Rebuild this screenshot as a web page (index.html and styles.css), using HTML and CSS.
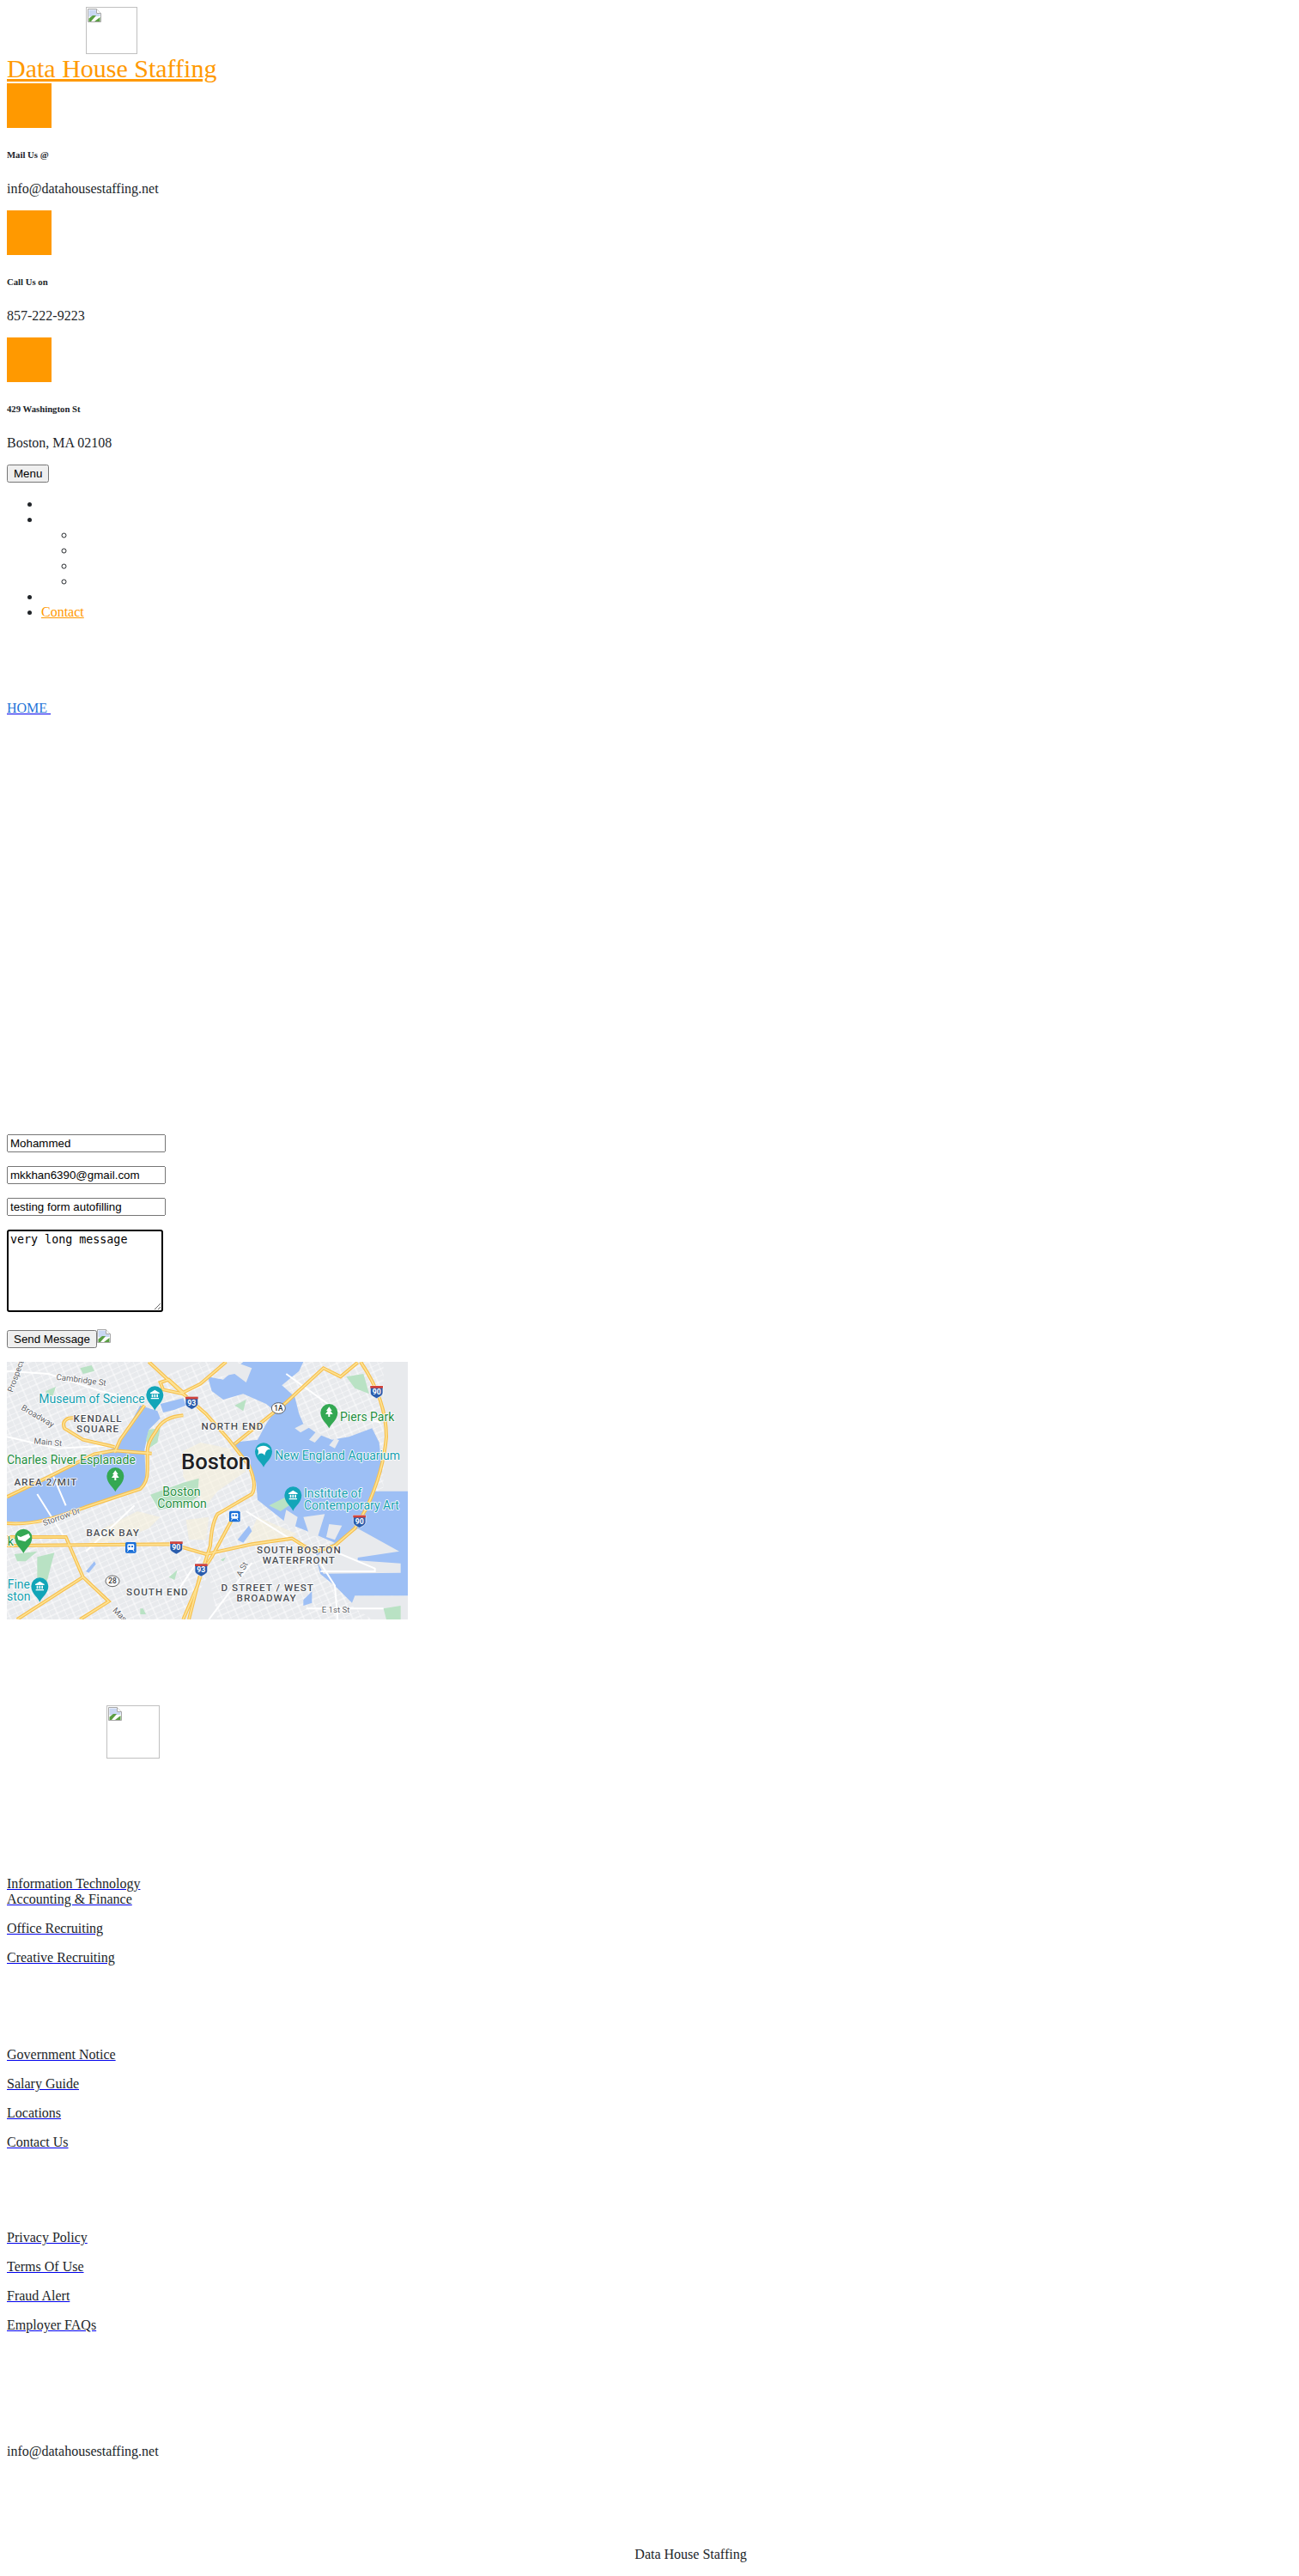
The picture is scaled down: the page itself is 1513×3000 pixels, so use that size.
FILE: index.html
```html
<!DOCTYPE html>
<html>
	<head>
		<title>Data House Staffing</title>
		<link rel="stylesheet" href="styles.css">
	</head>
	<body>
		<span class="broken logo"><svg class="broken-icon"><use href="#broken"/></svg></span>
		<a class="brand" href="#">Data House Staffing</a>

		<div class="square"></div>
		<h6>Mail Us @</h6>
		<p>info@datahousestaffing.net</p>
		<div class="square"></div>
		<h6>Call Us on</h6>
		<p>857-222-9223</p>
		<div class="square"></div>
		<h6>429 Washington St</h6>
		<p>Boston, MA 02108</p>

		<button class="btn">Menu</button>
		<ul>
			<li>&nbsp;</li>
			<li>&nbsp;
				<ul>
					<li>&nbsp;</li>
					<li>&nbsp;</li>
					<li>&nbsp;</li>
					<li>&nbsp;</li>
				</ul>
			</li>
			<li>&nbsp;</li>
			<li><a class="orange" href="#">Contact</a></li>
		</ul>

		<div class="crumb"><a href="#"><span class="crumb-text">HOME&nbsp;</span></a></div>

		<form class="contact-form">
			<p><input class="field" type="text" value="Mohammed"></p>
			<p><input class="field" type="text" value="mkkhan6390@gmail.com"></p>
			<p><input class="field" type="text" value="testing form autofilling"></p>
			<p><textarea class="message">very long message</textarea></p>
			<p class="send"><button class="btn send-btn" type="button">Send Message</button><svg class="send-icon"><use href="#broken"/></svg></p>
		</form>

		<svg class="map" viewBox="24 18 1401 900">
			<defs>
				<pattern id="streets" width="52" height="40" patternUnits="userSpaceOnUse" patternTransform="rotate(-24)">
					<rect width="52" height="40" fill="#e8eaed"/>
					<path d="M0 0H52M0 20H52M0 0V40M26 0V40" stroke="#fff" stroke-width="2.5"/>
				</pattern>
				<g id="pin"><path d="M0 55C-6 40-30 26-30 0A30 30 0 0 1 30 0C30 26 6 40 0 55Z"/></g>
				<g id="museum" fill="#fff">
					<path d="M-16-7 0-17 16-7V-4H-16ZM-14 11H14V15H-14Z"/>
					<path d="M-11-2H-6V9H-11ZM-2.500-2H2.500V9H-2.500ZM6-2H11V9H6Z"/>
				</g>
				<g id="tree" fill="#fff"><path d="M0-20-10-6H-5L-13 6H-3V15H3V6H13L5-6H10Z"/></g>
				<g id="i90">
					<path d="M-22-18H22V6C22 16 8 22 0 26-8 22-22 16-22 6Z" fill="#2a5dad" stroke="#fff" stroke-width="2"/>
					<path d="M-22-18H22V-10H-22Z" fill="#d3433a"/>
				</g>
				<g id="rail">
					<rect x="-19" y="-19" width="38" height="38" rx="5" fill="#1a6fd8"/>
					<rect x="-12" y="-12" width="24" height="20" rx="4" fill="#fff"/>
					<path d="M-8 8-12 14M8 8 12 14" stroke="#fff" stroke-width="3"/>
					<rect x="-8" y="-7" width="6" height="6" fill="#1a6fd8"/>
					<rect x="2" y="-7" width="6" height="6" fill="#1a6fd8"/>
				</g>
			</defs>

			<rect x="24" y="18" width="1401" height="900" fill="url(#streets)"/>
			<path class="pale" d="M640 330 700 300 800 320 860 400 760 470 720 520 640 420ZM300 660 420 640 520 600 560 560 480 540 360 600ZM650 570 730 560 720 640 660 640Z"/>
			<path class="pale" d="M900 560 1040 620 1000 640 860 650Z"/>
			<path class="gray" d="M1340 18H1425V500H1340ZM1230 835H1425V918H1300L1230 870Z"/>
			<path class="gray" d="M760 918 730 760 640 918ZM500 18 700 18 560 70Z"/>

			<!-- water -->
			<path class="water" d="M24 495 180 420 300 355 410 315 490 170 550 190 560 215 520 255 505 325 510 440 490 465 300 520 200 560 100 578 24 575Z"/>
			<path class="water" d="M850 18H1060L1045 50 985 100 1030 140 1045 200 1060 235 1110 270 1160 290 1220 280 1300 250 1325 300 1335 400 1300 470 1425 470V835H1240L1230 860 1200 830 1170 800 1120 760 1100 690 1170 650 1100 620 1000 580 900 500 895 440 870 380 810 300 900 290 930 235 960 190 930 165 850 130 780 150 740 120 726 70 780 80Z"/>
			<path class="water" d="M560 165 640 145 650 170 610 185 570 195Z"/>
			<path class="water" d="M830 640 870 590 880 610 850 650ZM1060 850 1090 820 1090 860 1060 870ZM300 750 330 715 335 725 310 755Z"/>

			<!-- piers and parks -->
			<path class="gray" d="M1170 655 1250 600 1395 680 1250 702V712L1400 722V755L1130 758 1100 700Z"/>
			<path class="gray" d="M1060 560 1135 550 1110 630 1080 620ZM1150 585 1195 590 1170 640 1140 630ZM1000 535 1040 560 1030 600 990 580Z"/>
			<path class="gray" d="M820 18H730L770 70 820 60 860 90 880 40ZM1060 235 1030 250 1050 265 1085 245ZM1105 262 1080 290 1100 300 1125 272ZM1170 285 1150 310 1170 320 1185 292Z"/>
			<path class="park" d="M525 482 640 440 695 425 690 490 650 520 555 535Z"/>
			<path class="park" d="M1210 70 1270 60 1290 130 1240 110Z"/>
			<path class="park" d="M510 290 520 255 560 250 550 300 520 320Z"/>
			<path class="park" d="M280 40 320 30 330 50 290 60ZM160 120 195 105 185 135 160 140ZM130 700 190 685 160 800 130 780ZM50 690 130 680 90 715 60 715ZM1340 880 1400 870 1400 918 1350 918ZM490 880 500 880 510 900 490 900Z"/>
			<path class="park" d="M590 770 620 745 610 780ZM770 710 790 700 780 715ZM820 170 860 150 850 190ZM940 520 1000 490 1040 500 980 540Z"/>

			<!-- main white roads -->
			<path class="road" d="M170 380 230 520M230 640 130 480M620 120 760 240M300 680 470 520M860 540 1100 690 1170 800 1180 918M1120 660 1310 740 1310 750 1120 750M880 720 730 918M700 700 600 850M1070 880H1340M1000 60 1180 190 1330 230"/>
			<path class="road" d="M24 280 200 320 400 310M24 50 170 60 350 120 480 150"/>

			<!-- highways -->
			<g class="highway">
				<path d="M24 582C120 590 200 560 300 525L490 462Q515 440 515 400L515 330Q515 300 545 260 570 210 640 205"/>
				<path d="M24 490 180 415 330 340 400 328 530 338"/>
				<path d="M505 170 420 290 400 335M400 315 290 290 225 250Q215 225 240 215L270 212"/>
				<path d="M520 18 640 130 720 200 800 290 870 380Q900 450 880 480L760 550Q740 580 735 660L690 800 640 918"/>
				<path d="M790 18 700 95 640 125 590 80 560 90 570 115 640 130"/>
				<path d="M24 660 600 655 720 690 880 655 1020 635 1060 660 1100 682"/>
				<path d="M810 570 740 700 700 760 660 918"/>
				<path d="M24 630 230 630 290 770 380 855 280 918M290 770 60 918"/>
				<path d="M820 305 1000 160 1130 40 1190 70 1250 20"/>
				<path d="M1260 18Q1350 150 1350 280 1340 400 1280 530L1240 600 1170 660 1100 682"/>
			</g>
			<g class="highway-in">
				<path d="M24 582C120 590 200 560 300 525L490 462Q515 440 515 400L515 330Q515 300 545 260 570 210 640 205"/>
				<path d="M24 490 180 415 330 340 400 328 530 338"/>
				<path d="M505 170 420 290 400 335M400 315 290 290 225 250Q215 225 240 215L270 212"/>
				<path d="M520 18 640 130 720 200 800 290 870 380Q900 450 880 480L760 550Q740 580 735 660L690 800 640 918"/>
				<path d="M790 18 700 95 640 125 590 80 560 90 570 115 640 130"/>
				<path d="M24 660 600 655 720 690 880 655 1020 635 1060 660 1100 682"/>
				<path d="M810 570 740 700 700 760 660 918"/>
				<path d="M24 630 230 630 290 770 380 855 280 918M290 770 60 918"/>
				<path d="M820 305 1000 160 1130 40 1190 70 1250 20"/>
				<path d="M1260 18Q1350 150 1350 280 1340 400 1280 530L1240 600 1170 660 1100 682"/>
			</g>

			<!-- labels -->
			<g class="lbl-street">
				<text transform="translate(196 80) rotate(7)">Cambridge St</text>
				<text transform="translate(44 126) rotate(-70)">Prospect</text>
				<text transform="translate(72 184) rotate(30)">Broadway</text>
				<text transform="translate(118 304) rotate(5)">Main St</text>
				<text transform="translate(154 592) rotate(-20)">Storrow Dr</text>
				<text transform="translate(842 770) rotate(-62)">A St</text>
				<text transform="translate(392 888) rotate(45)">Mass</text>
				<text x="1124" y="894">E 1st St</text>
			</g>
			<g class="lbl-area">
				<text x="342" y="228">KENDALL</text>
				<text x="342" y="264">SQUARE</text>
				<text x="160" y="450">AREA 2/MIT</text>
				<text x="813" y="255">NORTH END</text>
				<text x="395" y="627">BACK BAY</text>
				<text x="1045" y="687">SOUTH BOSTON</text>
				<text x="1045" y="723">WATERFRONT</text>
				<text x="935" y="819">D STREET / WEST</text>
				<text x="932" y="855">BROADWAY</text>
				<text x="550" y="834">SOUTH END</text>
			</g>
			<g class="lbl-teal">
				<text x="136" y="162">Museum of Science</text>
				<text x="961" y="360">New England Aquarium</text>
				<text x="1062" y="492">Institute of</text>
				<text x="1062" y="534">Contemporary Art</text>
				<text x="26" y="810">Fine</text>
				<text x="24" y="852">ston</text>
			</g>
			<g class="lbl-green">
				<text x="24" y="374">Charles River Esplanade</text>
				<text x="1188" y="224">Piers Park</text>
				<text x="568" y="486">Boston</text>
				<text x="550" y="528">Common</text>
				<text x="26" y="660">k</text>
			</g>
			<text class="lbl-city" x="633" y="392">Boston</text>

			<!-- pins -->
			<g class="pin-teal">
				<use href="#pin" x="541" y="133"/>
				<use href="#pin" x="921" y="331"/>
				<use href="#pin" x="1024" y="484"/>
				<use href="#pin" x="139" y="802"/>
			</g>
			<g class="pin-green">
				<use href="#pin" x="403" y="417"/>
				<use href="#pin" x="1150" y="195"/>
				<use href="#pin" x="82" y="632"/>
			</g>
			<use href="#museum" x="541" y="133"/>
			<use href="#museum" x="1024" y="484"/>
			<use href="#museum" x="139" y="802"/>
			<use href="#tree" x="403" y="417"/>
			<use href="#tree" x="1150" y="195"/>
			<path d="M897 320C915 305 935 310 945 325 935 322 928 328 925 345 918 335 908 335 900 345 905 332 904 326 897 320Z" fill="#fff"/>
			<path d="M60 625 72 630 100 618 106 630 88 646 64 640Z" fill="#fff"/>

			<!-- shields -->
			<use href="#i90" x="670" y="158"/>
			<use href="#i90" x="703" y="742"/>
			<use href="#i90" x="1316" y="120"/>
			<use href="#i90" x="1256" y="572"/>
			<use href="#i90" x="616" y="664"/>
			<text class="shield-num" x="670" y="170">93</text>
			<text class="shield-num" x="703" y="754">93</text>
			<text class="shield-num" x="1316" y="132">90</text>
			<text class="shield-num" x="1256" y="584">90</text>
			<text class="shield-num" x="616" y="676">90</text>
			<ellipse class="route" cx="973" cy="180" rx="24" ry="19"/>
			<ellipse class="route" cx="393" cy="784" rx="24" ry="19"/>
			<text class="route-num" x="973" y="189">1A</text>
			<text class="route-num" x="393" y="793">28</text>
			<use href="#rail" x="820" y="558"/>
			<use href="#rail" x="457" y="667"/>
		</svg>

		<span class="broken footer-logo"><svg class="broken-icon"><use href="#broken"/></svg></span>

		<div class="links links-a">
			<p><a href="#"><span>Information Technology</span></a><br><a href="#"><span>Accounting &amp; Finance</span></a></p>
			<p><a href="#"><span>Office Recruiting</span></a></p>
			<p><a href="#"><span>Creative Recruiting</span></a></p>
		</div>
		<div class="links links-b">
			<p><a href="#"><span>Government Notice</span></a></p>
			<p><a href="#"><span>Salary Guide</span></a></p>
			<p><a href="#"><span>Locations</span></a></p>
			<p><a href="#"><span>Contact Us</span></a></p>
		</div>
		<div class="links links-b">
			<p><a href="#"><span>Privacy Policy</span></a></p>
			<p><a href="#"><span>Terms Of Use</span></a></p>
			<p><a href="#"><span>Fraud Alert</span></a></p>
			<p><a href="#"><span>Employer FAQs</span></a></p>
		</div>
		<div class="footer-mail">info@datahousestaffing.net</div>
		<div class="copy">Data House Staffing</div>

		<svg class="svg-defs">
			<symbol id="broken" viewBox="0 0 16 16">
				<path d="M.5.5H10.500L15.500 5.500V15.500H.5Z" fill="#fff" stroke="#a8a8a8"/>
				<path d="M1.500 1.500H10V6H14.500V9L1.500 9.500Z" fill="#c9d7f2"/>
				<path d="M1.500 15V11.500L6 8H10L4 15Z" fill="#5a9e43"/>
				<path d="M8 15 14.500 10V15Z" fill="#5a9e43"/>
				<path d="M10.500.5V5.500H15.500" fill="#fff" stroke="#a8a8a8"/>
			</symbol>
		</svg>
	</body>
</html>
```

FILE: styles.css
```css
body
{
	margin:8px;
	font-family:"Liberation Serif",serif;
	font-size:16px;
	color:#212529;
	background:white;
}
.broken
{
	display:block;
	box-sizing:border-box;
	border:solid #c0c0c0 1px;
	padding:1px;
}
.broken-icon
{
	display:block;
	width:16px;
	height:16px;
}
.logo
{
	width:60px;
	height:55px;
	margin-left:92px;
}
.brand
{
	display:block;
	font-size:30px;
	line-height:34px;
	color:#ff9900;
}
.square
{
	width:52px;
	height:52px;
	background:#ff9900;
}
.btn
{
	font-family:"Liberation Sans",sans-serif;
	font-size:13.333px;
}
a
{
	color:#0000ee;
}
.orange
{
	color:#ff9900;
}
.crumb
{
	margin-top:94px;
}
.crumb-text
{
	color:#1e73d8;
}
.contact-form
{
	margin-top:487px;
}
.field
{
	box-sizing:border-box;
	width:185px;
	height:21px;
	font-family:"Liberation Sans",sans-serif;
	font-size:13.333px;
	vertical-align:top;
}
.message
{
	display:block;
	box-sizing:border-box;
	width:182px;
	height:96px;
	padding:2px;
	border:solid black 2px;
	border-radius:3px;
	outline:none;
	font-family:monospace;
	font-size:13.333px;
}
.send
{
	display:flex;
	align-items:flex-start;
	height:22px;
	margin-top:20px;
	margin-bottom:16px;
}
.send-btn
{
	margin-top:1px;
}
.send-icon
{
	width:16px;
	height:16px;
}
.map
{
	display:block;
	width:467px;
	height:300px;
}
.pale{fill:#f8f0d8;opacity:.55;}
.gray{fill:#e8eaed;}
.water{fill:#9dbff5;}
.park{fill:#b9e2c4;}
.road{fill:none;stroke:#fff;stroke-width:6;}
.highway path{fill:none;stroke:#f7c04f;stroke-width:12;}
.highway-in path{fill:none;stroke:#fde293;stroke-width:5;}
.map text
{
	font-family:Roboto,sans-serif;
	paint-order:stroke;
	stroke:#fff;
	stroke-width:5px;
	stroke-linejoin:round;
}
.lbl-street text{font-size:29px;fill:#5f6368;}
.lbl-area text{font-size:35px;font-weight:500;letter-spacing:3px;fill:#4a4e54;text-anchor:middle;}
.lbl-teal text{font-size:42px;fill:#129eaf;}
.lbl-green text{font-size:42px;fill:#1e8e3e;}
.map .lbl-city{font-size:77px;font-weight:500;fill:#202124;}
.pin-teal{fill:#12a5b8;}
.pin-green{fill:#34a853;}
.map .shield-num{font-size:26px;font-weight:700;fill:#fff;stroke:none;text-anchor:middle;}
.route{fill:#fff;stroke:#444;stroke-width:2.500;}
.map .route-num{font-size:25px;font-weight:500;fill:#333;stroke:none;text-anchor:middle;}
.footer-logo
{
	width:62px;
	height:62px;
	margin-top:100px;
	margin-left:116px;
}
.links p
{
	margin:0 0 16px;
}
.links span
{
	color:#212529;
}
.links-a
{
	margin-top:137px;
}
.links-b
{
	margin-top:93px;
}
.links-a + .links-b
{
	margin-top:95px;
}
.footer-mail
{
	margin-top:129px;
}
.copy
{
	margin-top:102px;
	padding-left:96px;
	text-align:center;
}
.svg-defs
{
	display:none;
}
```
